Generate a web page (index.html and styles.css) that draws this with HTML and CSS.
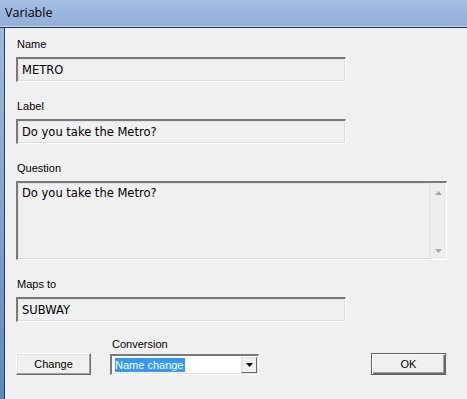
FILE: index.html
```html
<!DOCTYPE html>
<html>
<head>
<meta charset="utf-8">
<link rel="stylesheet" href="styles.css">
</head>
<body>
<div class="window">
  <div class="titlebar"><span class="title">Variable</span></div>
  <div class="frame">
    <div class="frame-left"></div>
    <div class="client">
      <div class="field">
        <div class="lbl">Name</div>
        <div class="box short">METRO</div>
      </div>
      <div class="field">
        <div class="lbl">Label</div>
        <div class="box short">Do you take the Metro?</div>
      </div>
      <div class="field field-q">
        <div class="lbl">Question</div>
        <div class="box tall">
          <div class="tall-text">Do you take the Metro?</div>
          <div class="vscroll">
            <svg width="7" height="4" viewBox="0 0 7 4"><path d="M0 4 L3.5 0 L7 4 Z" fill="#a8a8a8"/></svg>
            <svg width="7" height="4" viewBox="0 0 7 4"><path d="M0 0 L3.5 4 L7 0 Z" fill="#a8a8a8"/></svg>
          </div>
        </div>
      </div>
      <div class="field field-m">
        <div class="lbl">Maps to</div>
        <div class="box short">SUBWAY</div>
      </div>
      <div class="bottom">
        <button class="btn">Change</button>
        <div class="conv">
          <div class="lbl conv-lbl">Conversion</div>
          <div class="combo">
            <span class="sel">Name change</span>
            <span class="drop"><svg width="7" height="4" viewBox="0 0 7 4"><path d="M0 0 L3.5 4 L7 0 Z" fill="#000"/></svg></span>
          </div>
        </div>
        <button class="btn ok">OK</button>
      </div>
    </div>
  </div>
</div>
</body>
</html>
```
FILE: styles.css
```css
html, body {
  margin: 0;
  padding: 0;
  background: #f0f0f0;
}
.window {
  width: 467px;
  height: 399px;
  display: flex;
  flex-direction: column;
  overflow: hidden;
}
.titlebar {
  height: 28px;
  box-sizing: border-box;
  background: linear-gradient(to bottom, #a6c0e4 0%, #98b5dc 50%, #92b0da 100%);
  border-bottom: 1px solid #1f3457;
  box-shadow: inset 0 -1px 0 #c5d6ee;
  padding-left: 5px;
  display: flex;
  align-items: center;
}
.title {
  font-family: "Open Sans", "DejaVu Sans", sans-serif;
  font-size: 12.5px;
  color: #000;
  position: relative;
  top: -1px;
}
.frame {
  flex: 1;
  display: flex;
}
.frame-left {
  width: 4px;
  background: linear-gradient(to bottom, #9cb8de 0%, #7fa3d2 50%, #5a87c3 100%);
  border-right: 1px solid #2c3e5e;
}
.client {
  flex: 1;
  padding: 10px 0 0 11px;
  font-family: "DejaVu Sans", sans-serif;
}
.field {
  margin-bottom: 18px;
}
.field-q {
  margin-top: 3px;
}
.field-m {
  margin-top: 1px;
  margin-bottom: 16px;
}
.lbl {
  font-family: "Liberation Sans", sans-serif;
  font-size: 11px;
  line-height: 13px;
  color: #000;
  margin-bottom: 6px;
  padding-left: 1px;
}
.box {
  box-sizing: border-box;
  background: #f0f0f0;
  border-top: 2px solid #7a7a7a;
  border-left: 2px solid #7a7a7a;
  border-right: 1px solid #ffffff;
  border-bottom: 1px solid #ffffff;
  box-shadow: 1px 1px 0 #e3e3e3 inset, -1px -1px 0 #dcdcdc inset;
  font-family: "DejaVu Sans", sans-serif;
  font-size: 11.5px;
  color: #000;
}
.short {
  width: 330px;
  height: 25px;
  padding: 4px 0 0 4px;
}
.tall {
  width: 431px;
  height: 79px;
  display: flex;
}
.tall-text {
  flex: 1;
  padding: 3px 0 0 4px;
}
.vscroll {
  width: 16px;
  border-left: 1px solid #e4e4e4;
  background: #ededed;
  display: flex;
  flex-direction: column;
  justify-content: space-between;
  align-items: center;
  padding: 8px 0 6px;
}
.bottom {
  display: flex;
  align-items: flex-end;
}
.btn {
  box-sizing: border-box;
  width: 75px;
  height: 22px;
  margin: 0;
  padding: 0;
  background: #f0f0f0;
  border-top: 1px solid #ffffff;
  border-left: 1px solid #ffffff;
  border-right: 1px solid #696969;
  border-bottom: 1px solid #696969;
  box-shadow: inset -1px -1px 0 #a0a0a0, inset 1px 1px 0 #e3e3e3;
  font-family: "Liberation Sans", sans-serif;
  font-size: 11px;
  color: #000;
}
.conv {
  margin-left: 19px;
  display: flex;
  flex-direction: column;
}
.conv-lbl {
  margin-bottom: 3px;
  padding-left: 2px;
}
.combo {
  box-sizing: border-box;
  width: 149px;
  height: 21px;
  background: #fff;
  border-top: 2px solid #7a7a7a;
  border-left: 2px solid #7a7a7a;
  border-right: 1px solid #fff;
  border-bottom: 1px solid #fff;
  box-shadow: inset -1px -1px 0 #e3e3e3;
  display: flex;
  align-items: center;
  justify-content: space-between;
  padding-left: 3px;
}
.sel {
  background: #3399ff;
  color: #fff;
  font-family: "Liberation Sans", sans-serif;
  font-size: 11px;
  line-height: 14px;
  padding-right: 1px;
}
.drop {
  width: 16px;
  height: 16px;
  box-sizing: border-box;
  margin-right: 1px;
  background: #f0f0f0;
  border-top: 1px solid #e3e3e3;
  border-left: 1px solid #e3e3e3;
  border-right: 1px solid #696969;
  border-bottom: 1px solid #696969;
  display: flex;
  align-items: center;
  justify-content: center;
}
.ok {
  margin-left: 112px;
  border: 1px solid #646464;
  box-shadow: inset 1px 1px 0 #ffffff, inset -1px -1px 0 #696969, inset -2px -2px 0 #a0a0a0;
}
```
